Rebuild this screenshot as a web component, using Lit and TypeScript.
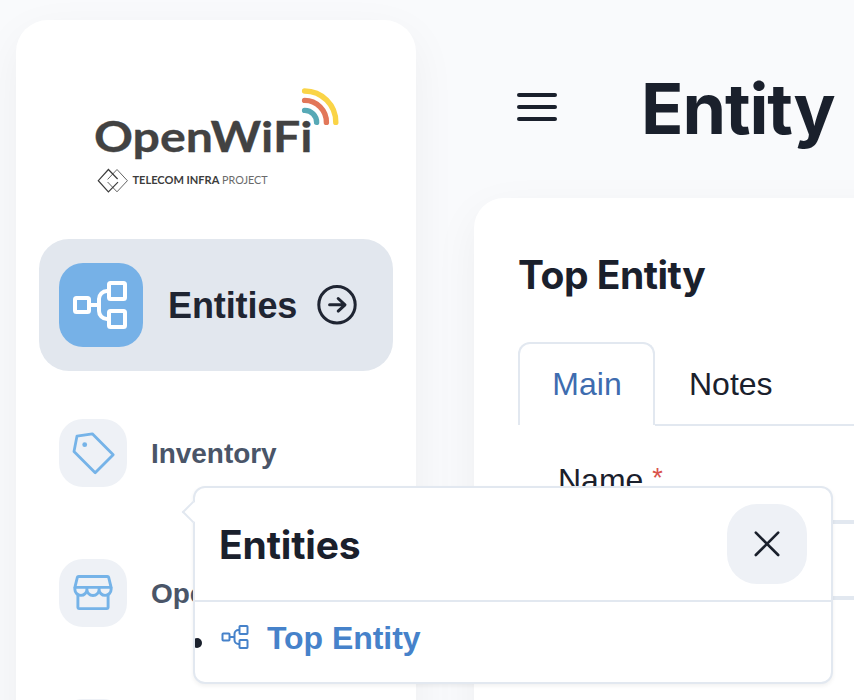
import { LitElement, html, css, svg } from "lit";
import { customElement, property } from "lit/decorators.js";

const treeIcon = html`<svg class="tree" viewBox="0 0 56 48" fill="none" stroke="currentColor" stroke-width="4">
  <rect x="3" y="17" width="14" height="14" rx="1.5" />
  <rect x="37" y="2" width="16" height="16" rx="1.5" />
  <rect x="37" y="30" width="16" height="16" rx="1.5" />
  <path d="M17 24H27M37 10h-2a8 8 0 0 0-8 8v12a8 8 0 0 0 8 8h2" />
</svg>`;

const tagIcon = html`<svg width="68" height="68" viewBox="0 0 68 68" fill="none" stroke="currentColor" stroke-width="2.8" stroke-linejoin="round">
  <path d="M18 17.1L33.3 14.8L54.2 35.7L36.2 53.7L15 32.6Z" />
  <circle cx="25.7" cy="25.7" r="2.4" fill="currentColor" stroke="none" />
</svg>`;

const storeIcon = html`<svg width="68" height="68" viewBox="0 0 68 68" fill="none" stroke="currentColor" stroke-width="2.9" stroke-linejoin="round">
  <path d="M19.6 17.5H48.4a1.4 1.4 0 0 1 1.3 1L52.1 28.4H15.9L18.3 18.5a1.4 1.4 0 0 1 1.3-1Z" />
  <path d="M15.9 28.3V30.4a6 6 0 0 0 12 0V28.3M27.9 30.4a6.1 6.1 0 0 0 12.2 0V28.3M40.1 30.4a6 6 0 0 0 12 0V28.3" />
  <path d="M18.9 35.5V48.6a1 1 0 0 0 1 1H48.1a1 1 0 0 0 1-1V35.5" />
</svg>`;

@customElement("brand-logo")
class BrandLogo extends LitElement {
  static styles = css`
    :host { display: block; }
    svg { display: block; }
    .word { font: 700 42px Lato, sans-serif; fill: #424242; stroke: #424242; stroke-width: 0.3px; }
    .strong { font: 700 10.5px Lato, sans-serif; fill: #3c3c3c; }
    .thin { font: 400 10.5px Lato, sans-serif; fill: #6a6a6a; }
  `;
  render() {
    return html`<svg width="250" height="110" viewBox="92 85 250 110">
      ${svg`
        <g fill="none" stroke-width="5.4" stroke-linecap="round">
          <path stroke="#fad447" d="M304.6 91A31.2 31.2 0 0 1 335.8 122.4" />
          <path stroke="#e27759" d="M304.6 100.4A21.8 21.8 0 0 1 326.4 122.4" />
          <path stroke="#57a9b6" d="M304.6 110.4A11.8 11.8 0 0 1 316.6 122.4" />
        </g>
        <text class="word" x="94" y="151.7" textLength="218.5" lengthAdjust="spacingAndGlyphs">OpenWiFi</text>
        <g fill="none" stroke="#3c3c3c">
          <path stroke-width="1.2" d="M117.6 179L108.4 169.5L98.3 180.7L108.4 191.8L118 182.2" />
          <path stroke-width="0.8" d="M107.6 182L117 191.8L127.4 180.7L117 169.5L107.6 179.4" />
        </g>
        <text class="strong" x="132.4" y="184.4" textLength="87" lengthAdjust="spacingAndGlyphs">TELECOM INFRA</text>
        <text class="thin" x="222" y="184.4" textLength="45.6" lengthAdjust="spacingAndGlyphs">PROJECT</text>
      `}
    </svg>`;
  }
}

@customElement("nav-item")
class NavItem extends LitElement {
  @property({ attribute: false }) icon: unknown;
  @property() label = "";
  static styles = css`
    :host { display: flex; align-items: center; gap: 24px; height: 68px; }
    .box { flex: none; width: 68px; height: 68px; border-radius: 24px; background: #eef1f6; color: #75b3e8; }
    svg { display: block; }
    .label { font: bold 28px/42px "Liberation Sans", Arial, sans-serif; color: #4a5568; white-space: nowrap; padding-top: 2px; letter-spacing: -0.05px; }
  `;
  render() {
    return html`<div class="box">${this.icon}</div><span class="label">${this.label}</span>`;
  }
}

@customElement("entity-popover")
class EntityPopover extends LitElement {
  static styles = css`
    :host {
      display: block; box-sizing: border-box; width: 640px; height: 198px;
      border: 2px solid #e2e8f0; border-radius: 12px; background: #fff;
      box-shadow: 0 2px 4px rgba(0, 0, 0, 0.06);
    }
    .tip {
      position: absolute; left: -10px; top: 16px; width: 16px; height: 16px; box-sizing: border-box;
      background: #fff; border: solid #e2e8f0; border-width: 0 0 2px 2px; transform: rotate(45deg);
    }
    .inner { position: relative; overflow: hidden; height: 100%; border-radius: 10px; }
    .head {
      display: flex; align-items: center; justify-content: space-between; box-sizing: border-box;
      height: 114px; padding: 0 24px; border-bottom: 2px solid #e2e8f0;
    }
    .title { font: 700 39px/48px Inter, sans-serif; letter-spacing: -0.15px; color: #1a202c; padding-top: 2px; }
    .close {
      display: grid; place-items: center; width: 80px; height: 80px; border-radius: 30px;
      background: #eef1f6; color: #1a202c;
    }
    .row { display: flex; align-items: center; height: 72px; color: #4682ca; }
    .dot { width: 10px; height: 10px; border-radius: 5px; background: #1a202c; margin: 10px 18.5px 0 -3px; }
    .tree { width: 28px; height: 24px; margin-top: -2px; }
    .link { font: bold 32px/40px "Liberation Sans", Arial, sans-serif; margin-left: 18.5px; letter-spacing: -0.05px; }
  `;
  render() {
    return html`<div class="tip"></div>
      <div class="inner">
        <div class="head">
          <span class="title">Entities</span>
          <div class="close">
            <svg width="28" height="28" viewBox="0 0 28 28" fill="none" stroke="currentColor" stroke-width="2.6" stroke-linecap="round"><path d="M2.8 2.6L25.2 25M25.2 2.6L2.8 25" /></svg>
          </div>
        </div>
        <div class="row"><span class="dot"></span>${treeIcon}<span class="link">Top Entity</span></div>
      </div>`;
  }
}

@customElement("app-root")
class AppRoot extends LitElement {
  static styles = css`
    :host {
      display: flex; position: relative; width: 854px; height: 700px; overflow: hidden;
      box-sizing: border-box; padding: 20px 0 0 16px; background: #f9fafc;
      font-family: "Liberation Sans", Arial, sans-serif; color: #1a202c;
    }
    .side {
      flex: none; width: 400px; height: 900px; box-sizing: border-box; padding: 65px 23px 0;
      border-radius: 32px; background: #fff; box-shadow: 0 14px 46px rgba(0, 0, 0, 0.05);
    }
    .logo { margin-left: 53px; }
    .active {
      display: flex; align-items: center; box-sizing: border-box; height: 132px; margin-top: 44px;
      padding: 0 20px; border-radius: 30px; background: #e2e7ee;
    }
    .active-box { display: grid; place-items: center; width: 84px; height: 84px; border-radius: 24px; background: #76b1e7; color: #fff; }
    .active-box .tree { width: 56px; height: 48px; margin-left: -2px; }
    .active-label { font: bold 36px/54px "Liberation Sans", Arial, sans-serif; letter-spacing: -0.1px; margin: 2px 19px 0 25px; color: #1f2532; }
    .items { display: flex; flex-direction: column; gap: 72px; padding: 48px 20px 0; }
    .main { flex: none; width: 600px; margin-left: 58px; }
    .top { display: flex; align-items: center; height: 178px; padding-left: 43px; }
    .burger { display: grid; gap: 8px; width: 40px; margin-top: -4px; }
    .bar { height: 4px; border-radius: 2px; background: #1a202c; }
    .h1 { font: 700 70px/86px Inter, sans-serif; letter-spacing: -1.1px; margin: 0 0 0 84px; }
    .card {
      height: 900px; box-sizing: border-box; padding: 53px 0 0 44px; border-radius: 30px; background: #fff;
      box-shadow: 0 14px 46px rgba(0, 0, 0, 0.05);
    }
    .h2 { font: 700 39px/48px Inter, sans-serif; letter-spacing: -0.5px; }
    .tabs { display: flex; height: 84px; margin-top: 43px; font-size: 32px; }
    .tab { box-sizing: border-box; display: flex; align-items: center; justify-content: center; }
    .on { width: 137px; height: 83px; padding-left: 1px; border: 2px solid #e2e8f0; border-bottom: none; border-radius: 12px 12px 0 0; color: #3e6caf; }
    .off { flex: 1; justify-content: flex-start; padding-left: 34px; border-bottom: 2px solid #e2e8f0; padding-top: 2px; }
    .field { padding: 36px 0 0 40px; font-size: 32px; line-height: 36px; }
    .label { display: flex; height: 36px; }
    .req { color: #d9534b; margin-left: 9px; font-size: 27px; line-height: 32px; }
    .input { height: 80px; box-sizing: border-box; border: 4px solid #e2e8f0; border-radius: 30px; margin-top: 22px; }
    .pop { position: absolute; left: 193px; top: 486px; }
  `;
  render() {
    return html`
      <div class="side">
        <brand-logo class="logo"></brand-logo>
        <div class="active">
          <div class="active-box">${treeIcon}</div>
          <span class="active-label">Entities</span>
          <svg width="42" height="42" viewBox="0 0 42 42" fill="none" stroke="#1f2532" stroke-width="3" stroke-linecap="round" stroke-linejoin="round">
            <circle cx="21" cy="20.8" r="18.2" />
            <path d="M13.6 20.8H28.8M22.2 14.5L29 20.8L22.2 27.1" />
          </svg>
        </div>
        <div class="items">
          <nav-item .icon=${tagIcon} label="Inventory"></nav-item>
          <nav-item .icon=${storeIcon} label="Operators"></nav-item>
          <nav-item></nav-item>
        </div>
      </div>
      <div class="main">
        <div class="top">
          <div class="burger"><i class="bar"></i><i class="bar"></i><i class="bar"></i></div>
          <div class="h1">Entity</div>
        </div>
        <div class="card">
          <div class="h2">Top Entity</div>
          <div class="tabs"><div class="tab on">Main</div><div class="tab off">Notes</div></div>
          <div class="field">
            <div class="label">Name<span class="req">*</span></div>
            <div class="input"></div>
          </div>
        </div>
      </div>
      <entity-popover class="pop"></entity-popover>
    `;
  }
}
